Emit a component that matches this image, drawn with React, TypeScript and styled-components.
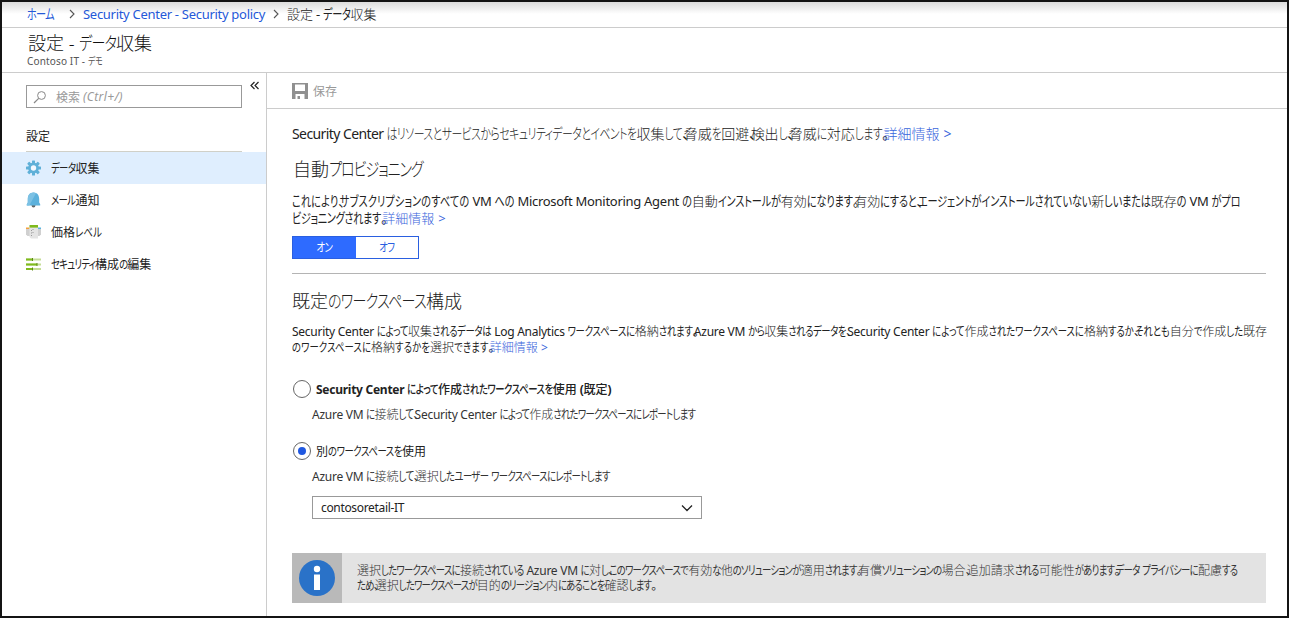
import React from 'react';
import styled, { createGlobalStyle, css } from 'styled-components';

const GlobalStyle = createGlobalStyle`
  *, *::before, *::after { box-sizing: border-box; }
  body {
    margin: 0;
    background: #fff;
    color: #222;
    font-family: "Noto Sans", "Noto Sans CJK JP", sans-serif;
    font-size: 12px;
  }
`;

/* ---------- Text ---------- */

const Latin = styled.span<{ $tight: number }>`
  line-height: 0;
  white-space: pre;
  letter-spacing: ${(p) => p.$tight}em;
`;

const Kanji = styled.span`
  line-height: 0;
  font-family: "Noto Sans CJK JP", sans-serif;
`;

/* Condensed kana: a smaller size stretched upwards from the baseline. */
const Kana = styled.span<{ $tight: number }>`
  display: inline-block;
  line-height: 1;
  font-family: "Noto Sans CJK JP", sans-serif;
  font-size: 0.78em;
  font-feature-settings: "palt";
  letter-spacing: ${(p) => ((p.$tight + 0.198) / 0.78).toFixed(4)}em;
  transform: scaleY(1.32);
  transform-origin: 0 88%;
`;

const Stop = styled.span`
  line-height: 0;
  font-family: "Noto Sans CJK JP", sans-serif;
  font-feature-settings: "palt";
  letter-spacing: -0.4em;
`;

type JaProps = { children: string; kana?: number; latin?: number };

/* Sets kana, kanji and Latin runs with their own tracking. */
function Ja({ children, kana = -0.25, latin = -0.022 }: JaProps) {
  const runs = children.match(/[ぁ-ヿ]+|[、。]|[一-龥]+|[^ぁ-ヿ、。一-龥]+/g) ?? [];
  return (
    <>
      {runs.map((run, i) => {
        if (/^[ぁ-ヿ]/.test(run)) return <Kana key={i} $tight={kana}>{run}</Kana>;
        if (/^[、。]/.test(run)) return <Stop key={i}>{run}</Stop>;
        if (/^[一-龥]/.test(run)) return <Kanji key={i}>{run}</Kanji>;
        return <Latin key={i} $tight={latin}>{run}</Latin>;
      })}
    </>
  );
}

const Line = styled.div`
  white-space: nowrap;
`;

const Link = styled.a`
  color: #3a66dc;
  text-decoration: none;
`;

/* ---------- Frame ---------- */

const Window = styled.div`
  display: flex;
  flex-direction: column;
  width: 1289px;
  height: 618px;
  border: 2px solid #141414;
  overflow: hidden;
`;

const Breadcrumb = styled.nav`
  display: flex;
  align-items: center;
  height: 26px;
  padding: 0 0 1px 25px;
  border-bottom: 1px solid #ccc;
  background: linear-gradient(#dcdcdc, #fff 12px);
  font-size: 13px;
  line-height: 24px;
  white-space: nowrap;
`;

const Crumb = styled.span<{ $link?: boolean; $width?: number }>`
  color: ${(p) => (p.$link ? '#2458d8' : '#222')};
  ${(p) => p.$width && css`width: ${p.$width}px;`}

  ${Kanji} { font-weight: 300; }
`;

const CrumbArrow = styled.svg`
  width: 6px;
  height: 10px;
  margin-right: 8px;
  flex: none;
`;

const Header = styled.header`
  height: 45px;
  padding: 4px 0 0 25px;
  border-bottom: 1px solid #ccc;
`;

const Title = styled.h1`
  margin: 0;
  padding-left: 1px;
  font-size: 18px;
  font-weight: 300;
  line-height: 22px;
  color: #111;
`;

const Subtitle = styled.div`
  font-size: 10px;
  line-height: 14px;
  color: #555;
`;

const Body = styled.div`
  display: flex;
  flex: 1;
  min-height: 0;
`;

/* ---------- Sidebar ---------- */

const Sidebar = styled.aside`
  display: flex;
  flex-direction: column;
  width: 265px;
  border-right: 1px solid #ccc;
`;

const SearchRow = styled.div`
  display: flex;
  align-items: flex-start;
  padding: 12px 0 0 24px;
`;

const SearchBox = styled.div`
  display: flex;
  align-items: center;
  width: 216px;
  height: 23px;
  padding-left: 6px;
  border: 1px solid #999;
  color: #999;
  line-height: 21px;
`;

const SearchGlyph = styled.svg`
  width: 14px;
  height: 14px;
  margin-right: 9px;
`;

const Hint = styled.em`
  margin-left: 3px;
`;

const Collapse = styled.svg`
  width: 9px;
  height: 9px;
  margin-left: 8px;
  margin-top: -4px;
`;

const GroupTitle = styled.div`
  width: 216px;
  height: 44px;
  margin-left: 24px;
  padding-top: 21px;
  border-bottom: 1px solid #d0d0c8;
  line-height: 16px;
`;

const NavItem = styled.div<{ $active?: boolean }>`
  display: flex;
  align-items: center;
  height: 32px;
  padding-left: 24px;
  background: ${(p) => (p.$active ? '#dfeefe' : 'transparent')};
  line-height: 20px;
  white-space: nowrap;
`;

const NavLabel = styled.span`
  display: block;
  padding-top: 2px;
`;

const NavIcon = styled.svg`
  width: 15px;
  height: 16px;
  margin-right: 10px;
`;

/* ---------- Main ---------- */

const Main = styled.main`
  display: flex;
  flex-direction: column;
  flex: 1;
  min-width: 0;
`;

const Toolbar = styled.div`
  display: flex;
  align-items: center;
  height: 36px;
  padding-left: 25px;
  border-bottom: 1px solid #ccc;
  color: #999;
  line-height: 34px;
`;

const SaveIcon = styled.svg`
  width: 16px;
  height: 16px;
  margin-right: 5px;
`;

const Content = styled.div`
  display: flex;
  flex-direction: column;
  padding: 15px 21px 0 25px;

  ${Kanji} { font-weight: 300; }
`;

const Intro = styled.p`
  margin: 0;
  height: 20px;
  color: #222;
  font-size: 14px;
  line-height: 19px;
  white-space: nowrap;

  ${Kana} { font-weight: 300; }
`;

const Heading = styled.h2<{ $top: number; $bottom: number; $indent?: number }>`
  margin: ${(p) => p.$top}px 0 ${(p) => p.$bottom}px ${(p) => p.$indent ?? 0}px;
  font-size: 18px;
  font-weight: 300;
  line-height: 24px;
  white-space: nowrap;
`;

const Paragraph = styled.div<{ $size: number; $leading: number }>`
  color: #222;
  font-size: ${(p) => p.$size}px;
  line-height: ${(p) => p.$leading}px;
`;

const Toggle = styled.div`
  display: flex;
  width: 127px;
  height: 23px;
  margin-top: 9px;
  border: 1px solid #2a5fe0;
`;

const ToggleOption = styled.div<{ $on?: boolean }>`
  flex: 1;
  background: ${(p) => (p.$on ? '#2e6bff' : '#fff')};
  color: ${(p) => (p.$on ? '#fff' : '#2a5fe0')};
  line-height: 21px;
  text-align: center;
`;

const Divider = styled.hr`
  width: 100%;
  height: 1px;
  margin: 14px 0 0;
  border: 0;
  background: #b4b4b4;
`;

const Option = styled.div<{ $top: number; $bold?: boolean }>`
  display: flex;
  align-items: center;
  height: 20px;
  margin-top: ${(p) => p.$top}px;
  font-weight: ${(p) => (p.$bold ? 700 : 400)};
  line-height: 20px;
  white-space: nowrap;

  ${Kanji}, ${Kana} { font-weight: ${(p) => (p.$bold ? 500 : 400)}; }
`;

const OptionLabel = styled.span`
  display: block;
  padding-top: 1px;
`;

const Radio = styled.span<{ $checked?: boolean }>`
  display: flex;
  align-items: center;
  justify-content: center;
  width: 18px;
  height: 18px;
  margin: 0 5px 0 1px;
  border: 1px solid #666;
  border-radius: 50%;

  &::after {
    content: "";
    width: 8px;
    height: 8px;
    border-radius: 50%;
    background: ${(p) => (p.$checked ? '#2058e0' : 'transparent')};
  }
`;

const OptionHint = styled.div`
  height: 20px;
  margin: 6px 0 0 20px;
  color: #333;
  line-height: 19px;
  white-space: nowrap;
`;

const Select = styled.div`
  display: flex;
  align-items: center;
  justify-content: space-between;
  width: 390px;
  height: 23px;
  margin: 9px 0 0 20px;
  padding: 0 8px;
  border: 1px solid #999;
  line-height: 21px;
`;

const Chevron = styled.svg`
  width: 12px;
  height: 8px;
`;

const Notice = styled.div`
  display: flex;
  height: 50px;
  margin-top: 34px;
  background: #e3e3e3;
  color: #333;
`;

const NoticeMark = styled.div`
  display: flex;
  align-items: center;
  justify-content: center;
  width: 50px;
  background: #b9b9b9;
`;

const NoticeText = styled.div`
  padding: 10px 0 0 15px;
  line-height: 15px;
`;

/* ---------- Icons ---------- */

const Arrow = () => (
  <CrumbArrow viewBox="0 0 6 10"><path d="M1 1l4 4-4 4" fill="none" stroke="#555" strokeWidth="1.1" /></CrumbArrow>
);

const GearIcon = () => (
  <NavIcon viewBox="0 0 15 16">
    <g fill="#5fb0d8">
      {[0, 45, 90, 135].map((a) => (
        <rect key={a} x="6" y="0.5" width="3" height="15" rx="0.6" transform={`rotate(${a} 7.5 8)`} />
      ))}
      <circle cx="7.5" cy="8" r="5.4" />
    </g>
    <circle cx="7.5" cy="8" r="2.7" fill="#f2f8ff" />
  </NavIcon>
);

const BellIcon = () => (
  <NavIcon viewBox="0 0 15 16">
    <circle cx="7.5" cy="13.6" r="1.9" fill="#666" />
    <path d="M7.5 0.5C3.800 0.500 1.800 3.300 1.800 7v3.600L0.800 12.200v1.300h13.400v-1.300l-1-1.600V7C13.200 3.300 11.200 0.500 7.500 0.500z" fill="#5cb1dc" />
    <path d="M7.500 0.500C3.800 0.500 1.800 3.300 1.800 7v3.600L0.800 12.200v1.300h2.500L10 1.200C9.300 0.700 8.500 0.500 7.500 0.500z" fill="#7cc1e4" />
  </NavIcon>
);

const PriceIcon = () => (
  <NavIcon viewBox="0 0 15 16">
    <path d="M0 4h4v8H1.500L0 10.500z" fill="#d0d0d0" />
    <path d="M11 4h4v6.500L13.500 12H11z" fill="#d0d0d0" />
    <path d="M0 3.500h3.500v1.500H0z" fill="#f5a13c" />
    <path d="M12 3.500h3v1.500h-3z" fill="#59b4e0" />
    <path d="M3.500 2.500h8.500v12H5L3.500 13z" fill="#e4e4e4" />
    <path d="M3.500 1h8.500v2.600H3.500z" fill="#7fba1c" />
    <path d="M5 6.500h1M6.500 5.500h1M5 9h1M6.500 8.500h1M5 11.500h1" stroke="#999" strokeWidth="1" />
  </NavIcon>
);

const SlidersIcon = () => (
  <NavIcon viewBox="0 0 15 16">
    <path d="M0 3.500h15M0 8.500h15M0 13h15" stroke="#c4dd95" strokeWidth="2" />
    <path d="M0 3.500h6M0 8.500h11M0 13h6" stroke="#7fba1c" strokeWidth="2" />
    <path d="M6.500 2v3M11 7v3M6.500 11.500v3" stroke="#5d8a12" strokeWidth="1" />
  </NavIcon>
);

export default function App() {
  return (
    <Window>
      <GlobalStyle />
      <Breadcrumb>
        <Crumb $link $width={42}><Ja kana={-0.25}>ホーム</Ja></Crumb>
        <Arrow />
        <Crumb $link $width={190}><Ja latin={-0.0225}>Security Center - Security policy</Ja></Crumb>
        <Arrow />
        <Crumb><Ja kana={-0.22}>設定 - データ収集</Ja></Crumb>
      </Breadcrumb>
      <Header>
        <Title><Ja kana={-0.24} latin={0}>設定 - データ収集</Ja></Title>
        <Subtitle><Ja kana={-0.2} latin={0.015}>Contoso IT - デモ</Ja></Subtitle>
      </Header>
      <Body>
        <Sidebar>
          <SearchRow>
            <SearchBox>
              <SearchGlyph viewBox="0 0 14 14">
                <circle cx="8.500" cy="5.500" r="3.900" fill="none" stroke="#888" />
                <path d="M5.700 8.300L1 13" stroke="#888" strokeWidth="1.200" />
              </SearchGlyph>
              <Ja>検索</Ja>
              <Hint><Ja latin={0.03}>(Ctrl+/)</Ja></Hint>
            </SearchBox>
            <Collapse viewBox="0 0 9 9">
              <path d="M4.500 1L1 4.500 4.500 8M8.500 1L5 4.500 8.500 8" fill="none" stroke="#222" strokeWidth="1.200" />
            </Collapse>
          </SearchRow>
          <GroupTitle><Ja>設定</Ja></GroupTitle>
          <NavItem $active><GearIcon /><NavLabel><Ja kana={-0.245}>データ収集</Ja></NavLabel></NavItem>
          <NavItem><BellIcon /><NavLabel><Ja kana={-0.245}>メール通知</Ja></NavLabel></NavItem>
          <NavItem><PriceIcon /><NavLabel><Ja kana={-0.18}>価格レベル</Ja></NavLabel></NavItem>
          <NavItem><SlidersIcon /><NavLabel><Ja kana={-0.258}>セキュリティ構成の編集</Ja></NavLabel></NavItem>
        </Sidebar>
        <Main>
          <Toolbar>
            <SaveIcon viewBox="0 0 16 16">
              <path d="M0 0h16v16H0z" fill="#909090" />
              <path d="M3 1.500h10V8H3z" fill="#fff" />
              <path d="M3.500 11h9v5h-9z" fill="#fff" />
              <path d="M5.500 13h2.500v3H5.500z" fill="#909090" />
            </SaveIcon>
            <Ja>保存</Ja>
          </Toolbar>
          <Content>
            <Intro>
              <Ja kana={-0.237} latin={-0.042}>Security Center はリソースとサービスからセキュリティデータとイベントを収集して、脅威を回避、検出し、脅威に対応します。</Ja>
              <Link><Ja latin={0.02}>詳細情報 &gt;</Ja></Link>
            </Intro>
            <Heading $top={13} $bottom={12} $indent={1}><Ja kana={-0.253}>自動プロビジョニング</Ja></Heading>
            <Paragraph $size={13} $leading={17}>
              <Line>
                <Ja kana={-0.186}>これにより、サブスクリプションのすべての</Ja>
                <Ja kana={-0.208}> VM への Microsoft Monitoring Agent の自動インストールが有効になります。有効にすると、エージェントがインストールされていない新しいまたは既存の VM がプロ</Ja>
              </Line>
              <Line>
                <Ja kana={-0.22}>ビジョニングされます。</Ja>
                <Link><Ja latin={0.04}>詳細情報 &gt;</Ja></Link>
              </Line>
            </Paragraph>
            <Toggle>
              <ToggleOption $on><Ja>オン</Ja></ToggleOption>
              <ToggleOption><Ja>オフ</Ja></ToggleOption>
            </Toggle>
            <Divider />
            <Heading $top={15} $bottom={11}><Ja kana={-0.237}>既定のワークスペース構成</Ja></Heading>
            <Paragraph $size={12} $leading={16}>
              <Line>
                <Ja kana={-0.225}>Security Center によって収集されるデータは Log Analytics </Ja>
                <Ja kana={-0.217}>ワークスペースに格納されます。Azure VM </Ja>
                <Ja kana={-0.234}>から収集されるデータを、Security Center </Ja>
                <Ja kana={-0.2}>によって作成されたワークスペースに格納するか、それとも自分で作成した既存</Ja>
              </Line>
              <Line>
                <Ja kana={-0.188}>のワークスペースに格納するかを選択できます。</Ja>
                <Link><Ja latin={0.02}>詳細情報 &gt;</Ja></Link>
              </Line>
            </Paragraph>
            <Option $top={23} $bold><Radio /><OptionLabel><Ja kana={-0.232}>Security Center によって作成されたワークスペースを使用 (既定)</Ja></OptionLabel></Option>
            <OptionHint><Ja kana={-0.254}>Azure VM に接続して、Security Center によって作成されたワークスペースにレポートします</Ja></OptionHint>
            <Option $top={16}><Radio $checked /><OptionLabel><Ja kana={-0.232}>別のワークスペースを使用</Ja></OptionLabel></Option>
            <OptionHint><Ja kana={-0.248}>Azure VM に接続して、選択したユーザー ワークスペースにレポートします</Ja></OptionHint>
            <Select>
              <Ja latin={-0.028}>contosoretail-IT</Ja>
              <Chevron viewBox="0 0 12 8"><path d="M1 1.500l5 5 5-5" fill="none" stroke="#222" strokeWidth="1.300" /></Chevron>
            </Select>
            <Notice>
              <NoticeMark>
                <svg width="36" height="36" viewBox="0 0 36 36">
                  <circle cx="18" cy="18" r="18" fill="#2a72c8" />
                  <circle cx="18" cy="9" r="3.200" fill="#fff" />
                  <path d="M15 14.500h6v15.500h-6z" fill="#fff" />
                </svg>
              </NoticeMark>
              <NoticeText>
                <Line><Ja kana={-0.256}>選択したワークスペースに接続されている Azure VM に対し、このワークスペースで有効な他のソリューションが適用されます。有償ソリューションの場合、追加請求される可能性があります。データ プライバシーに配慮する</Ja></Line>
                <Line><Ja kana={-0.265}>ため、選択したワークスペースが目的のリージョン内にあることを確認します。</Ja></Line>
              </NoticeText>
            </Notice>
          </Content>
        </Main>
      </Body>
    </Window>
  );
}
